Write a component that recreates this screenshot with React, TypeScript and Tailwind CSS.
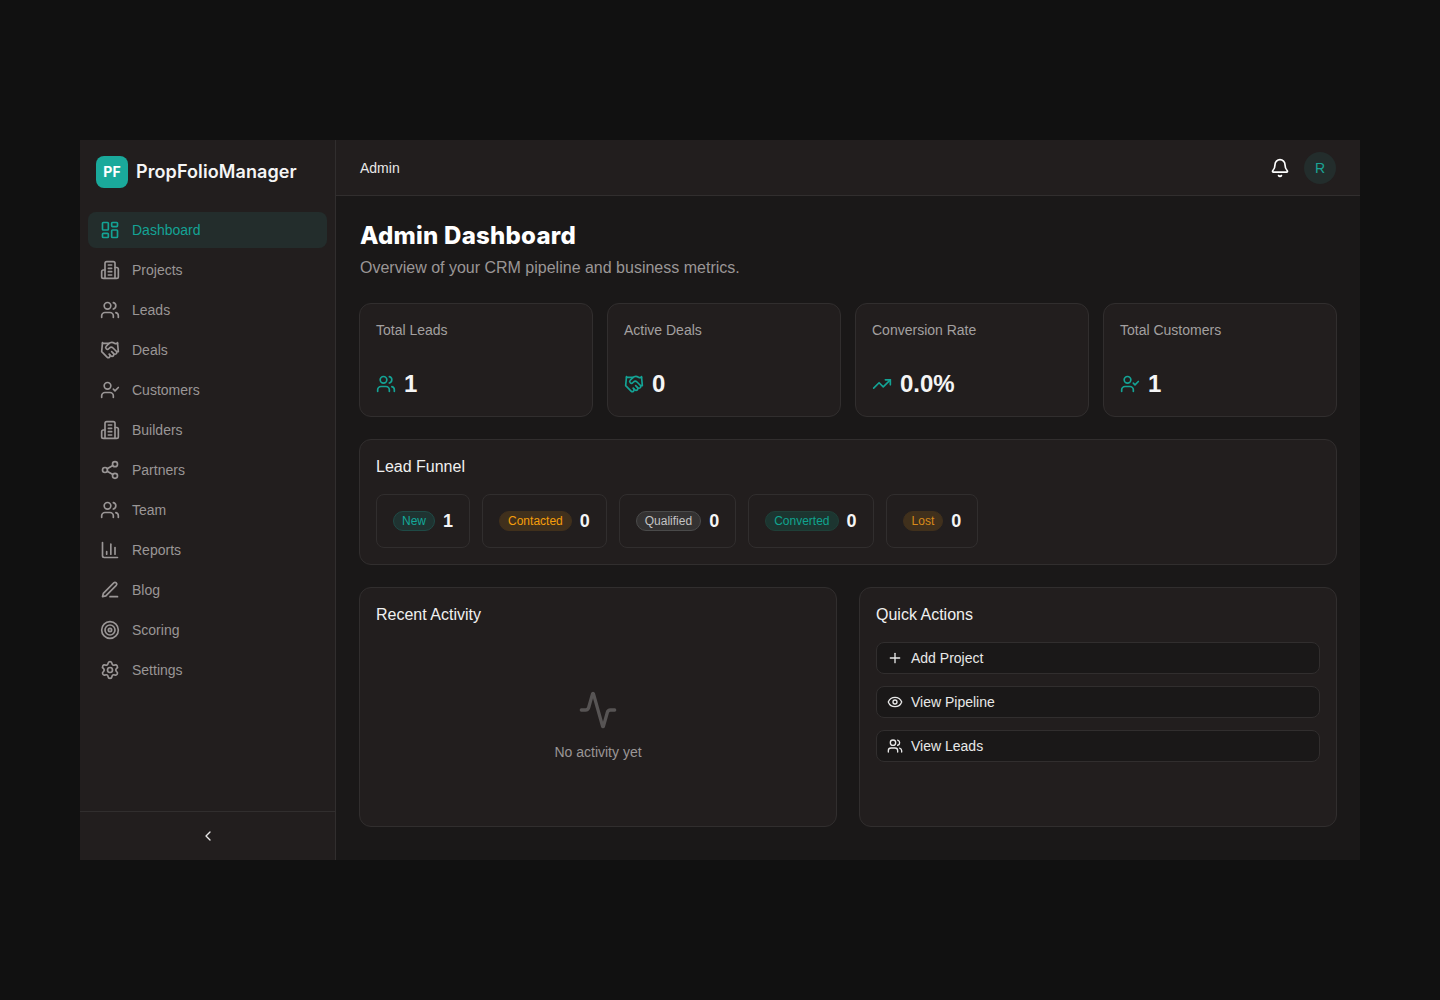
import { Activity, Bell, ChartColumn, ChevronLeft, Eye, Handshake, LayoutDashboard, Plus, Settings, Share2, Target, TrendingUp, UserCheck, Users } from "lucide-react"

// older lucide shapes, the installed version draws these two differently
function BuildingIcon({ className }: { className?: string }) {
  return (
    <svg viewBox="0 0 24 24" fill="none" stroke="currentColor" strokeWidth={2} strokeLinecap="round" strokeLinejoin="round" className={className}>
      <path d="M6 22V4a2 2 0 0 1 2-2h8a2 2 0 0 1 2 2v18Z" />
      <path d="M6 12H4a2 2 0 0 0-2 2v6a2 2 0 0 0 2 2h2" />
      <path d="M18 9h2a2 2 0 0 1 2 2v9a2 2 0 0 1-2 2h-2" />
      <path d="M10 6h4" />
      <path d="M10 10h4" />
      <path d="M10 14h4" />
      <path d="M10 18h4" />
    </svg>
  )
}

function PenIcon({ className }: { className?: string }) {
  return (
    <svg viewBox="0 0 24 24" fill="none" stroke="currentColor" strokeWidth={2} strokeLinecap="round" strokeLinejoin="round" className={className}>
      <path d="M12 20h9" />
      <path d="M16.5 3.5a2.12 2.12 0 0 1 3 3L7 19l-4 1 1-4Z" />
    </svg>
  )
}

const navItems = [
  { label: "Dashboard", icon: LayoutDashboard, active: true },
  { label: "Projects", icon: BuildingIcon },
  { label: "Leads", icon: Users },
  { label: "Deals", icon: Handshake },
  { label: "Customers", icon: UserCheck },
  { label: "Builders", icon: BuildingIcon },
  { label: "Partners", icon: Share2 },
  { label: "Team", icon: Users },
  { label: "Reports", icon: ChartColumn },
  { label: "Blog", icon: PenIcon },
  { label: "Scoring", icon: Target },
  { label: "Settings", icon: Settings },
]

const stats = [
  { label: "Total Leads", value: "1", icon: Users },
  { label: "Active Deals", value: "0", icon: Handshake },
  { label: "Conversion Rate", value: "0.0%", icon: TrendingUp },
  { label: "Total Customers", value: "1", icon: UserCheck },
]

const funnel = [
  { label: "New", value: 1, badge: "bg-[#1f3331] border-[#1f4a46] text-[#14a899]" },
  { label: "Contacted", value: 0, badge: "bg-[#40301c] border-[#40301c] text-[#f59e0b]" },
  { label: "Qualified", value: 0, badge: "bg-[#343232] border-[#4a4a4a] text-[#c4c4c4]" },
  { label: "Converted", value: 0, badge: "bg-[#1c3530] border-[#1f3f38] text-[#10a38f]" },
  { label: "Lost", value: 0, badge: "bg-[#40301c] border-[#40301c] text-[#d98a1a]" },
]

const actions = [
  { label: "Add Project", icon: Plus },
  { label: "View Pipeline", icon: Eye },
  { label: "View Leads", icon: Users },
]

export default function App() {
  return (
    <div className="min-h-screen flex items-center justify-center bg-[#111111] font-['Liberation_Sans',Arial,sans-serif]">
      <div className="w-[1280px] h-[720px] flex bg-[#1a1818] overflow-hidden">
        <aside className="w-[256px] shrink-0 flex flex-col bg-[#221e1e] border-r border-[#312e2e]">
          <div className="h-[64px] flex items-center gap-2 px-4">
            <div className="w-8 h-8 rounded-lg bg-[#1aa99b] flex items-center justify-center text-white text-sm font-bold font-['Inter',sans-serif]">PF</div>
            <span className="pb-[2px] text-[18px] font-semibold tracking-[0.1px] text-[#f5f5f5] font-['Inter',sans-serif]">PropFolioManager</span>
          </div>
          <nav className="flex-1 flex flex-col gap-1 px-2 pt-2">
            {navItems.map((item) => (
              <div
                key={item.label}
                className={`h-9 flex items-center gap-3 px-3 rounded-lg text-sm ${item.active ? "bg-[#232d2c] text-[#14a395]" : "text-[#9a9696]"}`}
              >
                <item.icon className="w-5 h-5 shrink-0" />
                <span>{item.label}</span>
              </div>
            ))}
          </nav>
          <div className="h-[49px] border-t border-[#312e2e] flex items-center justify-center text-[#e8e8e8]">
            <ChevronLeft className="w-4 h-4" />
          </div>
        </aside>

        <div className="flex-1 min-w-0 flex flex-col">
          <header className="h-[56px] shrink-0 flex items-center justify-between px-6 bg-[#221e1e] border-b border-[#312e2e]">
            <span className="text-sm text-[#e8e8e8]">Admin</span>
            <div className="flex items-center gap-[14px]">
              <Bell className="w-5 h-5 text-white" />
              <div className="w-8 h-8 rounded-full bg-[#232d2c] flex items-center justify-center text-sm text-[#1ba496]">R</div>
            </div>
          </header>

          <main className="flex-1 px-6 pt-6 flex flex-col">
            <h1 className="text-2xl font-extrabold leading-8 text-white tracking-[0.25px] font-['Inter',sans-serif]">Admin Dashboard</h1>
            <p className="mt-1 text-base text-[#9a9696] leading-6">Overview of your CRM pipeline and business metrics.</p>

            <div className="mt-[23px] grid grid-cols-4 gap-[14px] -mx-px">
              {stats.map((stat) => (
                <div key={stat.label} className="h-[114px] rounded-xl bg-[#221e1e] border border-[#312e2e] px-4 pt-4 pb-4 flex flex-col justify-between">
                  <p className="text-sm text-[#a3a0a0]">{stat.label}</p>
                  <div className="flex items-center gap-2">
                    <stat.icon className="w-5 h-5 text-[#14a395]" />
                    <span className="text-2xl font-bold text-[#f5f5f5]">{stat.value}</span>
                  </div>
                </div>
              ))}
            </div>

            <section className="mt-[22px] -mx-px h-[126px] rounded-xl bg-[#221e1e] border border-[#312e2e] p-4">
              <h2 className="text-base leading-[22px] text-[#f0f0f0]">Lead Funnel</h2>
              <div className="mt-4 flex gap-3">
                {funnel.map((f) => (
                  <div key={f.label} className="h-[54px] flex items-center gap-2 px-4 rounded-lg border border-[#312e2e]">
                    <span className={`px-2 py-[1px] rounded-full border text-xs ${f.badge}`}>{f.label}</span>
                    <span className="text-lg font-bold text-[#f5f5f5]">{f.value}</span>
                  </div>
                ))}
              </div>
            </section>

            <div className="mt-[22px] -mx-px grid grid-cols-2 gap-[22px]">
              <section className="h-[240px] rounded-xl bg-[#221e1e] border border-[#312e2e] p-4 flex flex-col">
                <h2 className="text-base leading-[22px] text-[#f0f0f0]">Recent Activity</h2>
                <div className="flex-1 flex flex-col items-center justify-center pt-4">
                  <Activity className="w-10 h-10 text-[#575454]" />
                  <p className="mt-3 text-sm text-[#9a9696]">No activity yet</p>
                </div>
              </section>
              <section className="h-[240px] rounded-xl bg-[#221e1e] border border-[#312e2e] p-4">
                <h2 className="text-base leading-[22px] text-[#f0f0f0]">Quick Actions</h2>
                <div className="mt-4 flex flex-col gap-3">
                  {actions.map((a) => (
                    <div key={a.label} className="h-8 flex items-center gap-2 px-[10px] rounded-lg bg-[#1a1818] border border-[#312e2e] text-sm text-[#e8e8e8]">
                      <a.icon className="w-4 h-4" />
                      <span>{a.label}</span>
                    </div>
                  ))}
                </div>
              </section>
            </div>
          </main>
        </div>
      </div>
    </div>
  )
}
